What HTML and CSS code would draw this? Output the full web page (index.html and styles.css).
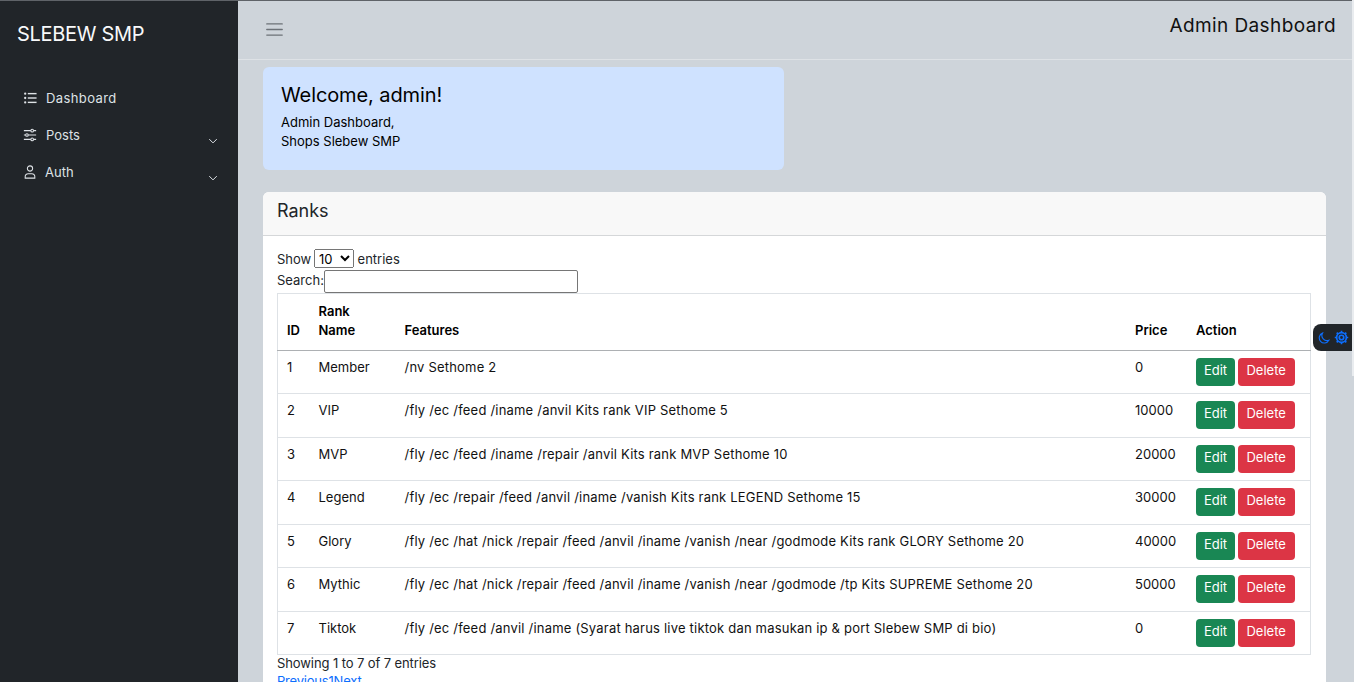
FILE: index.html
```html
<!DOCTYPE html>
<html lang="en">
<head>
    <meta charset="UTF-8">
    <title>Admin Dashboard</title>
    <link rel="stylesheet" href="styles.css">
</head>
<body>
  <div class="wrapper">
    <aside class="sidebar">
      <div class="brand">SLEBEW SMP</div>
      <ul class="side-menu">
        <li class="side-item">
          <svg class="side-icon" viewBox="0 0 16 16" fill="currentColor"><circle cx="2.5" cy="3" r="1.3"/><circle cx="2.5" cy="8" r="1.3"/><circle cx="2.5" cy="13" r="1.3"/><rect x="5.5" y="2.2" width="10" height="1.6"/><rect x="5.5" y="7.2" width="10" height="1.6"/><rect x="5.5" y="12.2" width="10" height="1.6"/></svg>
          <span class="side-wide">Dashboard</span>
        </li>
        <li class="side-item">
          <svg class="side-icon" viewBox="0 0 16 16" fill="none" stroke="currentColor" stroke-width="1.2"><path d="M1 3h8M12 3h3M1 8h2M6 8h9M1 13h8M12 13h3"/><circle cx="10.5" cy="3" r="1.5"/><circle cx="4.5" cy="8" r="1.5"/><circle cx="10.5" cy="13" r="1.5"/></svg>
          <span>Posts</span>
          <svg class="chev" viewBox="0 0 16 16" fill="none" stroke="currentColor" stroke-width="1.6"><path d="M2 5l6 6 6-6"/></svg>
        </li>
        <li class="side-item side-item-auth">
          <svg class="side-icon" viewBox="0 0 16 16" fill="none" stroke="currentColor" stroke-width="1.2"><circle cx="8" cy="4" r="3"/><path d="M2.5 15v-1.5c0-2 1.5-3.5 3.500-3.500h4c2 0 3.500 1.500 3.500 3.500V15z"/></svg>
          <span>Auth</span>
          <svg class="chev" viewBox="0 0 16 16" fill="none" stroke="currentColor" stroke-width="1.6"><path d="M2 5l6 6 6-6"/></svg>
        </li>
      </ul>
    </aside>

    <div class="main">
      <header class="topbar">
        <svg class="burger" viewBox="0 0 30 30" fill="none" stroke="#6c7177" stroke-width="2" stroke-linecap="round"><path d="M4 7h22M4 15h22M4 23h22"/></svg>
        <h1 class="page-title">Admin Dashboard</h1>
      </header>

      <div class="content">
        <div class="welcome">
          <h2>Welcome, admin!</h2>
          <p>Admin Dashboard,<br>Shops Slebew SMP</p>
        </div>

        <div class="card">
          <div class="card-header">Ranks</div>
          <div class="card-body">
            <div class="dt-length">Show
              <select><option>10</option></select>
              entries</div>
            <div class="dt-search">Search:<input type="text"></div>
            <table class="ranks">
              <thead>
                <tr>
                  <th class="col-id">ID</th>
                  <th class="col-name">Rank Name</th>
                  <th>Features</th>
                  <th class="col-price">Price</th>
                  <th class="col-action">Action</th>
                </tr>
              </thead>
              <tbody>
                <tr><td>1</td><td>Member</td><td>/nv Sethome 2</td><td>0</td><td><span class="btn btn-edit">Edit</span> <span class="btn btn-del">Delete</span></td></tr>
                <tr><td>2</td><td>VIP</td><td>/fly /ec /feed /iname /anvil Kits rank VIP Sethome 5</td><td>10000</td><td><span class="btn btn-edit">Edit</span> <span class="btn btn-del">Delete</span></td></tr>
                <tr><td>3</td><td>MVP</td><td>/fly /ec /feed /iname /repair /anvil Kits rank MVP Sethome 10</td><td>20000</td><td><span class="btn btn-edit">Edit</span> <span class="btn btn-del">Delete</span></td></tr>
                <tr><td>4</td><td>Legend</td><td>/fly /ec /repair /feed /anvil /iname /vanish Kits rank LEGEND Sethome 15</td><td>30000</td><td><span class="btn btn-edit">Edit</span> <span class="btn btn-del">Delete</span></td></tr>
                <tr><td>5</td><td>Glory</td><td>/fly /ec /hat /nick /repair /feed /anvil /iname /vanish /near /godmode Kits rank GLORY Sethome 20</td><td>40000</td><td><span class="btn btn-edit">Edit</span> <span class="btn btn-del">Delete</span></td></tr>
                <tr><td>6</td><td>Mythic</td><td>/fly /ec /hat /nick /repair /feed /anvil /iname /vanish /near /godmode /tp Kits SUPREME Sethome 20</td><td>50000</td><td><span class="btn btn-edit">Edit</span> <span class="btn btn-del">Delete</span></td></tr>
                <tr><td>7</td><td>Tiktok</td><td>/fly /ec /feed /anvil /iname (Syarat harus live tiktok dan masukan ip &amp; port Slebew SMP di bio)</td><td>0</td><td><span class="btn btn-edit">Edit</span> <span class="btn btn-del">Delete</span></td></tr>
              </tbody>
            </table>
            <div class="dt-info">Showing 1 to 7 of 7 entries</div>
            <div class="dt-pages"><a href="#">Previous</a><a href="#">1</a><a href="#">Next</a></div>
          </div>
        </div>
      </div>
    </div>
  </div>

  <div class="theme-toggle">
    <svg class="moon" viewBox="0 0 16 16" fill="none" stroke="#0d6efd" stroke-width="1.5"><path d="M6 1.500a6.800 6.800 0 0 0 8.500 9.500A6.800 6.800 0 1 1 6 1.500z"/></svg>
    <svg class="gear" viewBox="0 0 16 16" fill="none" stroke="#0d6efd" stroke-width="1.8"><circle cx="8" cy="8" r="2.400"/><circle cx="8" cy="8" r="5.200"/><path d="M8 .8v2M8 13.200v2M.8 8h2M13.200 8h2M2.900 2.900l1.500 1.500M11.600 11.600l1.500 1.500M2.900 13.100l1.500-1.500M11.600 4.400l1.500-1.500"/></svg>
  </div>
  <div class="scroll-thumb"></div>
</body>
</html>
```
FILE: styles.css
```css
html, body {
    height: 100%;
    overflow: hidden;
}

body {
    margin: 0;
    background-color: #ced4da;
    font-family: Inter, "Open Sans", sans-serif;
    font-size: 13px;
    color: #212529;
    border-top: 1px solid #5f6368;
    box-sizing: border-box;
}

.wrapper {
    display: flex;
    min-height: 100%;
}

/* sidebar */
.sidebar {
    width: 238px;
    flex-shrink: 0;
    background-color: #212529;
    color: #dee2e6;
}

.brand {
    padding: 20px 17px 0;
    font-size: 20px;
    line-height: 27px;
    letter-spacing: -0.3px;
    color: #f8f9fa;
}

.side-menu {
    list-style: none;
    margin: 31px 0 0;
    padding: 0;
}

.side-item {
    display: flex;
    align-items: center;
    height: 37px;
    padding-left: 23px;
    position: relative;
}

.side-wide {
    letter-spacing: 0.4px;
}

.side-icon {
    width: 14px;
    height: 14px;
    margin-right: 9px;
}

.side-item-auth .side-icon {
    margin-right: 8px;
}

.chev {
    position: absolute;
    left: 208px;
    top: 20px;
    width: 10px;
    height: 10px;
}

/* top bar */
.main {
    flex: 1;
    min-width: 0;
}

.topbar {
    display: flex;
    justify-content: space-between;
    height: 58px;
    border-bottom: 1px solid #dee2e6;
    padding: 0 18px 0 26px;
}

.burger {
    width: 21px;
    height: 21px;
    margin-top: 18px;
}

.page-title {
    margin: 12px 0 0;
    font-size: 19px;
    line-height: 26px;
    font-weight: 400;
    letter-spacing: 0.4px;
    color: #111;
}

.content {
    padding: 7px 28px 0 25px;
}

/* welcome box */
.welcome {
    width: 521px;
    height: 103px;
    box-sizing: border-box;
    padding: 16px 18px 0;
    background-color: #cfe2ff;
    border-radius: 6px;
    color: #000;
}

.welcome h2 {
    margin: 0 0 6px;
    font-size: 20px;
    line-height: 24px;
    font-weight: 400;
    letter-spacing: -0.1px;
}

.welcome p {
    margin: 0;
    line-height: 19px;
}

/* card */
.card {
    margin-top: 22px;
    background-color: #fff;
    border-radius: 6px;
}

.card-header {
    height: 43px;
    padding: 0 14px;
    font-size: 18px;
    line-height: 37px;
    background-color: #f8f8f8;
    border-bottom: 1px solid #d5d7d9;
    border-radius: 6px 6px 0 0;
}

.card-body {
    padding: 13px 14px 0;
}

.dt-length {
    height: 20px;
    line-height: 20px;
}

.dt-length select {
    height: 19px;
    width: 40px;
    margin-left: -1px;
    font-family: inherit;
    font-size: 13px;
    padding: 0;
}

.dt-search {
    display: flex;
    align-items: flex-start;
    height: 23px;
    line-height: 20px;
    margin-top: 1px;
}

.dt-search input {
    width: 254px;
    height: 23px;
    box-sizing: border-box;
    border: 1px solid #767676;
    border-radius: 2px;
    padding: 0;
}

/* table */
.ranks {
    width: 1034px;
    table-layout: fixed;
    border-collapse: collapse;
    border: 1px solid #dee2e6;
}

.ranks th {
    box-sizing: border-box;
    text-align: left;
    vertical-align: bottom;
    font-weight: 600;
    padding: 8px 9px 10px;
    line-height: 19px;
    color: #000;
    border-bottom: 1px solid #adb0b3;
}

.ranks td {
    vertical-align: top;
    height: 43.500px;
    box-sizing: border-box;
    padding: 7px 9px 0;
    line-height: 19px;
    color: #111;
    border-top: 1px solid #dee2e6;
    white-space: nowrap;
}

.ranks td:nth-child(3) {
    letter-spacing: 0.2px;
}

.ranks tbody tr:first-child td {
    height: 43px;
    border-top: 0;
}

.col-id {
    width: 32px;
}

.col-name {
    width: 86px;
}

.col-price {
    width: 61px;
}

.col-action {
    width: 123.500px;
}

.btn {
    display: inline-block;
    height: 28px;
    line-height: 25px;
    border-radius: 4px;
    color: #fff;
    text-align: center;
    box-sizing: border-box;
}

.btn-edit {
    width: 39px;
    background-color: #198754;
}

.btn-del {
    width: 57px;
    margin-left: -1px;
    background-color: #dc3545;
}

.dt-info {
    line-height: 16px;
    letter-spacing: -0.1px;
}

.dt-pages {
    line-height: 19px;
    margin-top: 1px;
    letter-spacing: -0.2px;
}

.dt-pages a {
    color: #0d6efd;
    text-decoration: underline;
}

/* floating theme toggle */
.theme-toggle {
    position: fixed;
    top: 324px;
    right: 0;
    width: 41px;
    height: 27px;
    box-sizing: border-box;
    padding-left: 5px;
    display: flex;
    align-items: center;
    gap: 4px;
    background-color: #212529;
    border-radius: 8px 0 0 8px;
}

.moon {
    width: 12px;
    height: 12px;
}

.gear {
    width: 15px;
    height: 15px;
}

.scroll-thumb {
    position: fixed;
    top: 0;
    right: 0;
    width: 2px;
    height: 376px;
    background-color: #e9ecef;
}
```
